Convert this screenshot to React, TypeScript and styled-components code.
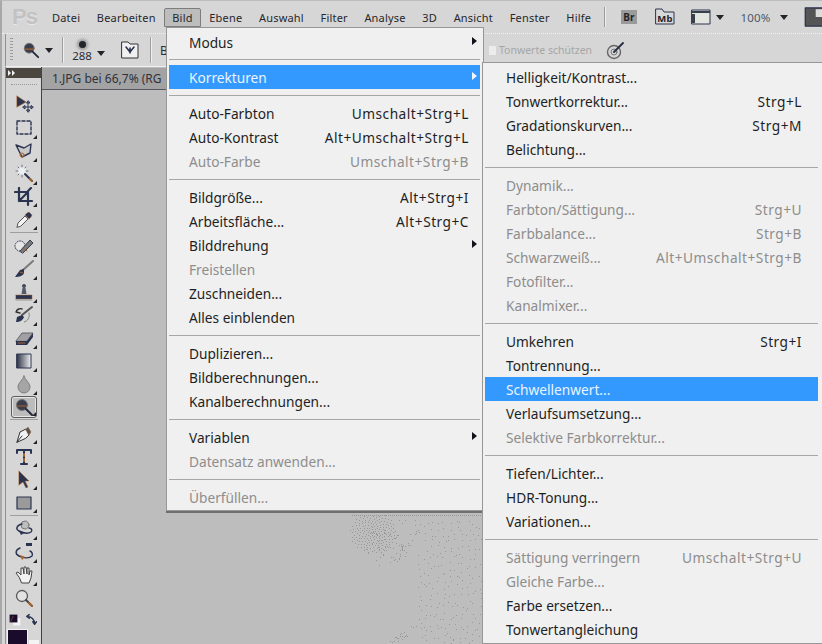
import React from 'react';
import styled, { createGlobalStyle } from 'styled-components';

const GlobalStyle = createGlobalStyle`
  html, body { margin: 0; padding: 0; background: #d6d6d6; overflow: hidden; }
  body { font-family: "Noto Sans", "Open Sans", sans-serif; }
`;

const NAVY = '#2a3350';
const RUST = '#a9642a';

type Row = { label: string; key?: string; off?: boolean; sub?: boolean; on?: boolean };

const bildMenu: Row[][] = [
  [{ label: 'Modus', sub: true }],
  [{ label: 'Korrekturen', sub: true, on: true }],
  [
    { label: 'Auto-Farbton', key: 'Umschalt+Strg+L' },
    { label: 'Auto-Kontrast', key: 'Alt+Umschalt+Strg+L' },
    { label: 'Auto-Farbe', key: 'Umschalt+Strg+B', off: true },
  ],
  [
    { label: 'Bildgröße...', key: 'Alt+Strg+I' },
    { label: 'Arbeitsfläche...', key: 'Alt+Strg+C' },
    { label: 'Bilddrehung', sub: true },
    { label: 'Freistellen', off: true },
    { label: 'Zuschneiden...' },
    { label: 'Alles einblenden' },
  ],
  [{ label: 'Duplizieren...' }, { label: 'Bildberechnungen...' }, { label: 'Kanalberechnungen...' }],
  [{ label: 'Variablen', sub: true }, { label: 'Datensatz anwenden...', off: true }],
  [{ label: 'Überfüllen...', off: true }],
];

const korrekturenMenu: Row[][] = [
  [
    { label: 'Helligkeit/Kontrast...' },
    { label: 'Tonwertkorrektur...', key: 'Strg+L' },
    { label: 'Gradationskurven...', key: 'Strg+M' },
    { label: 'Belichtung...' },
  ],
  [
    { label: 'Dynamik...', off: true },
    { label: 'Farbton/Sättigung...', key: 'Strg+U', off: true },
    { label: 'Farbbalance...', key: 'Strg+B', off: true },
    { label: 'Schwarzweiß...', key: 'Alt+Umschalt+Strg+B', off: true },
    { label: 'Fotofilter...', off: true },
    { label: 'Kanalmixer...', off: true },
  ],
  [
    { label: 'Umkehren', key: 'Strg+I' },
    { label: 'Tontrennung...' },
    { label: 'Schwellenwert...', on: true },
    { label: 'Verlaufsumsetzung...' },
    { label: 'Selektive Farbkorrektur...', off: true },
  ],
  [{ label: 'Tiefen/Lichter...' }, { label: 'HDR-Tonung...' }, { label: 'Variationen...' }],
  [
    { label: 'Sättigung verringern', key: 'Umschalt+Strg+U', off: true },
    { label: 'Gleiche Farbe...', off: true },
    { label: 'Farbe ersetzen...' },
    { label: 'Tonwertangleichung' },
  ],
];

const menuTitles = ['Datei', 'Bearbeiten', 'Bild', 'Ebene', 'Auswahl', 'Filter', 'Analyse', '3D', 'Ansicht', 'Fenster', 'Hilfe'];

const Page = styled.div`
  position: relative;
  width: 822px;
  height: 644px;
  overflow: hidden;
  background: #d6d6d6;
  display: flex;
  flex-direction: column;
  border-top: 1px solid #bdbdbd;
  border-left: 2px solid #a8a8a8;
  box-sizing: border-box;
`;

const MenuBar = styled.div`
  height: 33px;
  flex: none;
  display: flex;
  align-items: center;
  padding-left: 10px;
  box-sizing: border-box;
  border-bottom: 1px dotted #f2f2f2;
  font-size: 11px;
  letter-spacing: 0.2px;
  color: #26282c;
`;

const Logo = styled.div`
  width: 31.7px;
  flex: none;
  font: bold 22px "Liberation Sans", sans-serif;
  letter-spacing: -1px;
  color: #c2c2c2;
  text-shadow: 0 1px 0 #e8e8e8;
`;

const MenuTitle = styled.div<{ $open?: boolean }>`
  height: 19px;
  line-height: 17px;
  flex: none;
  padding: 0 7.3px;
  box-sizing: border-box;
  border: 1px solid ${(p) => (p.$open ? '#7d7d7d' : 'transparent')};
  border-radius: 2px 2px 0 0;
  background: ${(p) => (p.$open ? '#bdbdbd' : 'transparent')};
`;

const BarDivider = styled.div`
  width: 1px;
  height: 20px;
  flex: none;
  margin: 0 14px 0 5px;
  background: #9a9a9a;
  box-shadow: 1px 0 0 #eee;
`;

const BarIcons = styled.div`
  display: flex;
  align-items: center;
  gap: 16px;
  font-size: 11.5px;
  color: #4d5a6a;
`;

const Caret = styled.span<{ $left?: number; $right?: number; $top?: number }>`
  width: 0;
  height: 0;
  flex: none;
  margin: ${(p) => p.$top ?? 0}px ${(p) => p.$right ?? 0}px 0 ${(p) => p.$left ?? 0}px;
  border-left: 4px solid transparent;
  border-right: 4px solid transparent;
  border-top: 5px solid #22242a;
`;

const OptionsBar = styled.div`
  height: 33px;
  flex: none;
  margin-left: 3px;
  display: flex;
  align-items: center;
  box-sizing: border-box;
  border-bottom: 1px solid #f0f0f0;
  border-left: 1px solid #8d939c;
  font-size: 12px;
  color: #2b2d33;
`;

const Grip = styled.div`
  width: 3px;
  height: 24px;
  flex: none;
  margin: 0 9px 0 4px;
  background: repeating-linear-gradient(#9c9c9c 0 1px, transparent 1px 3px);
`;

const OptionDivider = styled.div`
  width: 1px;
  height: 26px;
  flex: none;
  background: #a0a0a0;
  box-shadow: 1px 0 0 #eee;
`;

const BrushPreset = styled.div`
  width: 26px;
  flex: none;
  display: flex;
  flex-direction: column;
  align-items: center;
  font-size: 11.5px;
  line-height: 14px;
  margin-left: 6px;
  gap: 1px;
`;

const BrushDot = styled.div`
  width: 7px;
  height: 7px;
  margin-top: 3px;
  border-radius: 50%;
  background: #23252d;
  box-shadow: 0 0 3px 2px #9a9a9a;
`;

const ModeLabel = styled.span`
  width: 40px;
  flex: none;
  margin-left: 9px;
`;

const ProtectTone = styled.div`
  display: flex;
  align-items: center;
  gap: 3px;
  margin-left: 289px;
  font-size: 10.5px;
  white-space: nowrap;
  color: #a6a6a6;
`;

const Box = styled.span`
  width: 7px;
  height: 9px;
  background: #ececec;
`;

const Spacer = styled.span<{ $w: number }>`
  width: ${(p) => p.$w}px;
  flex: none;
`;

const Body = styled.div`
  flex: 1;
  min-height: 0;
  display: flex;
  margin-left: 3px;
  border-left: 1px solid #8d939c;
`;

const ToolDock = styled.div`
  width: 35px;
  flex: none;
  display: flex;
  flex-direction: column;
  align-items: center;
  background: #d6d6d6;
  border-right: 1px solid #39425a;
`;

const DockHead = styled.div`
  align-self: stretch;
  height: 10px;
  flex: none;
  margin-top: 1px;
  padding-left: 2px;
  display: flex;
  align-items: center;
  gap: 1px;
  background: #4c4640;
`;

const Chevron = styled.span`
  width: 0;
  height: 0;
  border-top: 3px solid transparent;
  border-bottom: 3px solid transparent;
  border-left: 3px solid #f2f2f2;
`;

const DockGrip = styled.div`
  width: 26px;
  height: 1px;
  flex: none;
  margin: 6px 0 8px;
  border-top: 1px dotted #9a9a9a;
`;

const Tool = styled.div<{ $fly?: boolean; $on?: boolean }>`
  position: relative;
  width: 26px;
  height: 22.9px;
  flex: none;
  display: flex;
  align-items: center;
  justify-content: center;
  box-sizing: border-box;
  ${(p) => p.$on && `
    background: #bcbcbc;
    border: 1px solid #5c5c5c;
    border-radius: 3px;
    box-shadow: inset 0 0 0 1px #e6e6e6;
  `}
  ${(p) => p.$fly && `
    &::after {
      content: '';
      position: absolute;
      right: 0;
      bottom: 1px;
      width: 0;
      height: 0;
      border-left: 4px solid transparent;
      border-bottom: 4px solid #22242a;
    }
  `}
`;

const ToolDivider = styled.div`
  width: 28px;
  height: 1px;
  flex: none;
  margin: 1px 0 2px;
  background: #9e9e9e;
`;

const ColorIcons = styled.div`
  align-self: stretch;
  height: 16px;
  flex: none;
  margin-top: 2px;
  padding: 0 4px 0 3px;
  display: flex;
  align-items: center;
  justify-content: space-between;
`;

const Swatches = styled.div`
  position: relative;
  flex: 1;
  align-self: stretch;
`;

const Foreground = styled.div`
  position: absolute;
  left: 1px;
  top: 1px;
  width: 19px;
  height: 24px;
  background: #1a0a2c;
  border: 1px solid #f2f2f2;
`;

const Background = styled.div`
  position: absolute;
  left: 23px;
  top: 12px;
  width: 10px;
  height: 14px;
  background: #f4f4f4;
`;

const Workspace = styled.div`
  position: relative;
  flex: 1;
  min-width: 0;
  background: #bdbdbd;
  display: flex;
  flex-direction: column;
`;

const TabStrip = styled.div`
  height: 21px;
  flex: none;
  margin-top: 1px;
  display: flex;
  align-items: center;
  padding-left: 10px;
  font-size: 12px;
  white-space: nowrap;
  color: #30323a;
  background: #a3a3a3;
  border-bottom: 1px solid #55585f;
`;

const Dots = styled.svg`
  position: absolute;
  left: -2px;
  top: -1px;
`;

const Menu = styled.div<{ $left: number; $top: number; $width: number; $height: number; $rightPad: number }>`
  position: absolute;
  left: ${(p) => p.$left}px;
  top: ${(p) => p.$top}px;
  width: ${(p) => p.$width}px;
  height: ${(p) => p.$height}px;
  box-sizing: border-box;
  padding: 2px ${(p) => p.$rightPad}px 2px 2px;
  background: #f0f0f0;
  border: 1px solid #979797;
  font-size: 13.7px;
  color: #1d1f24;
`;

const BildPanel = styled(Menu)`
  box-shadow: 0 2px 0 #6f6f6f;
`;

const MenuRow = styled.div<{ $on?: boolean; $off?: boolean; $pad: number; $lead: number }>`
  position: relative;
  height: 24px;
  display: flex;
  align-items: center;
  justify-content: space-between;
  padding: 0 ${(p) => p.$pad}px 0 ${(p) => p.$lead}px;
  white-space: nowrap;
  background: ${(p) => (p.$on ? '#3399ff' : 'transparent')};
  color: ${(p) => (p.$on ? '#eaf4ff' : p.$off ? '#8d8d8d' : 'inherit')};
`;

const Shortcut = styled.span`
  letter-spacing: 0.5px;
`;

const MenuRule = styled.div<{ $tight?: boolean }>`
  height: 1px;
  margin: ${(p) => (p.$tight ? '5px' : '6px')} 0 5px;
  background: #a6a6a6;
`;

const SubArrow = styled.span<{ $on?: boolean }>`
  position: absolute;
  right: 3px;
  top: 7px;
  width: 0;
  height: 0;
  border-top: 4px solid transparent;
  border-bottom: 4px solid transparent;
  border-left: 5px solid ${(p) => (p.$on ? '#f2f8ff' : '#14101c')};
`;

const Icon = ({ size = 20, children }: { size?: number; children: React.ReactNode }) => (
  <svg width={size} height={size} viewBox="0 0 20 20" fill="none" strokeLinecap="round" strokeLinejoin="round" style={{ flex: 'none' }}>
    {children}
  </svg>
);

const Lens = () => (
  <>
    <circle cx="8" cy="8" r="5.5" fill="#3a3d4c" stroke="#777" />
    <path d="M4 9h8" stroke={RUST} strokeWidth="1.2" />
    <path d="M12 12l6 6" stroke="#23283a" strokeWidth="2" />
  </>
);

const tools: Record<string, React.ReactNode> = {
  move: (
    <>
      <path d="M3 1l9 6-9 5z" fill={NAVY} stroke={RUST} strokeWidth=".6" />
      <path d="M14 7v9M10 12h8M14 6l-1.5 2h3zM14 17l-1.5-2h3zM9 12l2-1.5v3zM19 12l-2-1.5v3z" stroke={NAVY} />
    </>
  ),
  marquee: <rect x="3" y="3" width="14" height="13" stroke={NAVY} strokeWidth="1.4" strokeDasharray="3 2" />,
  lasso: (
    <>
      <path d="M2 4l8 3 7-4-1 9-8 4z" stroke={NAVY} strokeWidth="1.4" fill="#c9c9c9" />
      <circle cx="8" cy="14" r="2" stroke={RUST} />
    </>
  ),
  wand: (
    <>
      <circle cx="8" cy="7" r="4" fill="#eceff2" />
      <path d="M8 1v2M8 11v2M2 7h2M12 7h2M4 3l1 1M12 3l-1 1M4 11l1-1" stroke="#6d7484" />
      <path d="M11 10l7 7" stroke={NAVY} strokeWidth="2" />
      <path d="M16 15l2 2" stroke={RUST} strokeWidth="2" />
    </>
  ),
  crop: <path d="M5 1v13h13M1 5h13v13M5 14L14 5M17 1L14 4" stroke={NAVY} strokeWidth="2.2" />,
  dropper: (
    <>
      <path d="M3 17l1-4 7-7 3 3-7 7z" fill="#f4f4f4" stroke="#555" />
      <path d="M11 5l2-2 2-1 3 3-1 2-2 2z" fill={NAVY} stroke={RUST} strokeWidth=".5" />
    </>
  ),
  heal: (
    <>
      <circle cx="6" cy="9" r="5" fill="#e6e6e6" stroke={NAVY} strokeDasharray="1 1.5" />
      <path d="M6 14L16 3l3 3-10 10z" fill="#77787c" stroke="#3a3f50" />
      <path d="M9 11l4 3" stroke={RUST} />
    </>
  ),
  brush: (
    <>
      <path d="M19 1L9 10" stroke="#7a7a7a" strokeWidth="2" />
      <path d="M10 9l-4 1-5 7c4 0 8-1 9-4z" fill={NAVY} />
      <path d="M6 12l3 1" stroke={RUST} />
    </>
  ),
  stamp: (
    <>
      <circle cx="10" cy="3" r="2" fill="#444a5c" />
      <path d="M8.5 5h3l1 6h-5z" fill="#555b6b" />
      <path d="M2 12h16v4H2z" fill={NAVY} stroke={RUST} strokeWidth=".5" />
      <path d="M2 17h16" stroke="#999" />
    </>
  ),
  history: (
    <>
      <path d="M18 2L8 10" stroke="#555" strokeWidth="2" />
      <path d="M8 10l-5 2-1 5c4 0 7-2 8-5z" fill={NAVY} />
      <path d="M2 7c1-3 4-4 6-3M2 7l4 1" stroke="#333" strokeWidth="1.4" />
      <path d="M15 8c1 4-1 8-5 9" stroke="#777" strokeDasharray="1 1" />
    </>
  ),
  eraser: (
    <>
      <path d="M2 13l6-8h11l-6 8z" fill="#a1a1a5" stroke="#666" />
      <path d="M2 13h11v4H2zM13 13l6-8v4l-6 8z" fill={NAVY} />
      <path d="M4 15h7" stroke={RUST} />
    </>
  ),
  gradient: <rect x="3" y="3" width="14" height="14" fill="url(#grad)" stroke={NAVY} />,
  burn: <path d="M10 2c1 4 6 7 6 11a6 6 0 0 1-12 0c0-4 5-7 6-11z" fill="#a5a5a5" stroke="#7c7c7c" />,
  zoom: <Lens />,
  pen: (
    <>
      <path d="M3 18l3-10 6-3 3 6-3 3z" fill="#f2f2f2" stroke="#333" />
      <path d="M3 18l5-6" stroke="#333" />
      <path d="M12 5l2-2 3 5-2 3z" fill="#555" stroke={RUST} strokeWidth=".5" />
    </>
  ),
  text: (
    <>
      <path d="M3 6V3h14v3M10 3v14M7 17h6" stroke={NAVY} strokeWidth="2" />
      <path d="M10 7v2M10 12v2" stroke={RUST} strokeWidth="2" />
    </>
  ),
  select: <path d="M5 1l10 10h-4l3 6-2 1-3-6-4 3z" fill={NAVY} stroke={RUST} strokeWidth=".5" />,
  shape: <rect x="3" y="4" width="14" height="12" fill="#9a9a9a" stroke={NAVY} strokeWidth="1.2" />,
  orbit: (
    <>
      <circle cx="11" cy="6" r="4" fill="#bdbdbd" stroke="#777" />
      <path d="M8 5C3 6 1 10 5 12c4 2 9 3 12 1 2-2 0-4-2-4" stroke={NAVY} strokeWidth="1.4" />
      <path d="M5 12l5 2-3 2z" fill={NAVY} />
    </>
  ),
  orbitCam: (
    <>
      <path d="M12 1h6v3h-6z" fill={NAVY} />
      <path d="M6 6C1 8 1 12 5 14c4 2 10 3 13 0 1-2 0-4-2-5" stroke={NAVY} strokeWidth="1.4" />
      <path d="M6 13l5 2-3 3z" fill={RUST} />
    </>
  ),
  hand: (
    <path d="M5 12L2 8l2-1 3 3V3l2 0 1 6V2h2l1 7V3h2v7l1-4h2l-1 7-2 5H8z" fill="#f2f2f2" stroke="#444" />
  ),
  loupe: (
    <>
      <circle cx="8" cy="8" r="5.5" fill="#e2e2e2" stroke="#5a5a5a" strokeWidth="1.3" />
      <path d="M12 12l6 6" stroke="#444" strokeWidth="2" />
      <path d="M15 15l3 3" stroke={RUST} strokeWidth="2" />
    </>
  ),
};

const toolGroups: [string, boolean, boolean?][][] = [
  [['move', false], ['marquee', true], ['lasso', true], ['wand', true], ['crop', true], ['dropper', true]],
  [['heal', true], ['brush', true], ['stamp', true], ['history', true], ['eraser', true], ['gradient', true], ['burn', true], ['zoom', true, true]],
  [['pen', true], ['text', true], ['select', true], ['shape', true]],
  [['orbit', true], ['orbitCam', true], ['hand', true], ['loupe', false]],
];

// stipple in the empty canvas, seeded so that every load gives the same dots
const makeDots = () => {
  const out: [number, number][] = [];
  for (let i = 0; i < 190; i++) {
    const r = Math.pow(i, 0.6);
    const a = i * 2.39996;
    const x = 373 + r * Math.cos(a);
    const y = 532 + r * Math.sin(a) * 0.9;
    if (y > 515) out.push([x, y]);
  }
  let seed = 77;
  const rnd = () => {
    seed = (seed * 16807) % 2147483647;
    return seed / 2147483647;
  };
  for (let i = 0; i < 55; i++) {
    const a = rnd() * 6.283;
    const r = 20 * Math.sqrt(rnd());
    out.push([386 + r * Math.cos(a), 548 + r * Math.sin(a) * 0.9]);
  }
  for (let x = 417; x < 482; x += 6) {
    for (let y = 520; y < 644; y += 6) {
      if (rnd() > 0.1) out.push([x + rnd() * 5, y + rnd() * 5]);
    }
  }
  for (let i = 0; i < 30; i++) {
    const x = 385 + rnd() * 32;
    out.push([x, 644 - (x - 385) * 0.7 + rnd() * 8]);
  }
  for (let i = 0; i < 22; i++) {
    out.push([395 + rnd() * 22, 519 + rnd() * 38]);
  }
  for (let x = 352; x < 482; x += 2) out.push([x, 515]);
  return out;
};

const dots = makeDots();

const MenuRows = ({ groups, pad, lead, tightFirst }: { groups: Row[][]; pad: number; lead: number; tightFirst?: boolean }) => (
  <>
    {groups.map((group, g) => (
      <React.Fragment key={g}>
        {g > 0 && <MenuRule $tight={tightFirst && g === 1} />}
        {group.map((row) => (
          <MenuRow key={row.label} $on={row.on} $off={row.off} $pad={pad} $lead={lead}>
            <span>{row.label}</span>
            {row.key && <Shortcut>{row.key}</Shortcut>}
            {row.sub && <SubArrow $on={row.on} />}
          </MenuRow>
        ))}
      </React.Fragment>
    ))}
  </>
);

const App: React.FC = () => (
  <Page>
    <GlobalStyle />
    <MenuBar>
      <Logo>Ps</Logo>
      {menuTitles.map((t) => (
        <MenuTitle key={t} $open={t === 'Bild'}>
          {t}
        </MenuTitle>
      ))}
      <BarDivider />
      <BarIcons>
        <Icon>
          <rect x="2" y="3" width="16" height="14" fill="#9a9a9a" />
          <text x="10" y="14" fontSize="10" fontWeight="bold" textAnchor="middle" fill="#22242a">Br</text>
        </Icon>
        <Icon>
          <path d="M1 2h6l2 3h10v12H1z" fill="#d8d8d8" stroke={NAVY} />
          <text x="10" y="14.5" fontSize="9.5" fontWeight="bold" textAnchor="middle" fill="#22242a">Mb</text>
        </Icon>
        <Icon>
          <rect x="1" y="3" width="18" height="14" fill="#e2e6df" stroke={NAVY} />
          <path d="M1 4h18v2H1zM1 7h3v9H1z" fill="#3a3f4c" />
        </Icon>
        <Caret $left={-11} />
        <span>100%</span>
        <Caret $left={-7} />
        <Icon size={26}>
          <rect x="1" y="3" width="18" height="14" fill="#555" stroke={NAVY} />
          <path d="M9 4h9v6H9z" fill="#ddd" />
        </Icon>
      </BarIcons>
    </MenuBar>
    <OptionsBar>
      <Grip />
      <Icon size={18}>
        <Lens />
      </Icon>
      <Caret $left={5} $right={9} />
      <OptionDivider />
      <BrushPreset>
        <BrushDot />
        288
      </BrushPreset>
      <Caret $left={2} $right={15} $top={6} />
      <Icon>
        <path d="M2 2h6l2 2h8v14H2z" fill="#f0f0f0" stroke="#333" />
        <path d="M10 13V8M6 7l4 5 4-5" stroke={NAVY} strokeWidth="1.6" />
      </Icon>
      <Spacer $w={10} />
      <OptionDivider />
      <ModeLabel>B</ModeLabel>
      <ProtectTone>
        <Box />
        Tonwerte schützen
      </ProtectTone>
      <Spacer $w={14} />
      <Icon>
        <circle cx="8" cy="12" r="6.5" stroke="#666" strokeWidth="1.4" />
        <circle cx="8" cy="12" r="3" stroke="#777" />
        <path d="M8 12L17 3" stroke="#2b3146" strokeWidth="2" />
      </Icon>
    </OptionsBar>
    <Body>
      <ToolDock>
        <DockHead>
          <Chevron />
          <Chevron />
        </DockHead>
        <DockGrip />
        {toolGroups.map((group, g) => (
          <React.Fragment key={g}>
            {g > 0 && <ToolDivider />}
            {group.map(([name, fly, on]) => (
              <Tool key={name} $fly={fly} $on={on}>
                <Icon>
                  {name === 'gradient' && (
                    <defs>
                      <linearGradient id="grad">
                        <stop offset="0" stopColor="#30364a" />
                        <stop offset="1" stopColor="#f0f0f0" />
                      </linearGradient>
                    </defs>
                  )}
                  {tools[name]}
                </Icon>
              </Tool>
            ))}
          </React.Fragment>
        ))}
        <ColorIcons>
          <Icon size={12}>
            <rect x="7" y="7" width="12" height="12" fill="#f4f4f4" />
            <rect x="1" y="1" width="13" height="13" fill="#1a0a2c" />
            <path d="M3 12l4-8" stroke={RUST} />
          </Icon>
          <Icon size={12}>
            <path d="M3 4c8 0 13 5 13 13M3 4l4-3M3 4l4 3M16 17l-3-4M16 17l3-4" stroke={NAVY} strokeWidth="2.4" />
          </Icon>
        </ColorIcons>
        <Swatches>
          <Foreground />
          <Background />
        </Swatches>
      </ToolDock>
      <Workspace>
        <TabStrip>1.JPG bei 66,7% (RG</TabStrip>
      </Workspace>
    </Body>
    <Dots width="822" height="644">
      {dots.map(([x, y], i) => (
        <rect key={i} x={Math.round(x)} y={Math.round(y)} width="1" height="1" fill="#979797" />
      ))}
    </Dots>
    <BildPanel $left={164} $top={26} $width={318} $height={484} $rightPad={3}>
      <MenuRows groups={bildMenu} pad={11} lead={20} tightFirst />
    </BildPanel>
    <Menu $left={480} $top={61} $width={342} $height={582} $rightPad={5}>
      <MenuRows groups={korrekturenMenu} pad={16} lead={21} />
    </Menu>
  </Page>
);

export default App;
